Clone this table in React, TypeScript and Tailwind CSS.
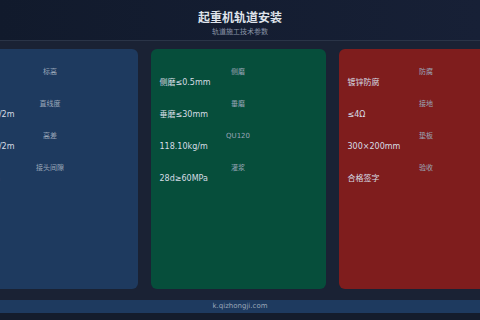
const cards = [
  {
    bg: "bg-[#1e3a5f]",
    rows: [
      { label: "标高", value: "合格证" },
      { label: "直线度", value: "≤1mm/2m" },
      { label: "高差", value: "≤1mm/2m" },
      { label: "接头间隙", value: "2-4mm" },
    ],
  },
  {
    bg: "bg-[#064e3b]",
    rows: [
      { label: "侧磨", value: "侧磨≤0.5mm" },
      { label: "垂磨", value: "垂磨≤30mm" },
      { label: "QU120", value: "118.10kg/m" },
      { label: "灌浆", value: "28d≥60MPa" },
    ],
  },
  {
    bg: "bg-[#7f1d1d]",
    rows: [
      { label: "防腐", value: "镀锌防腐" },
      { label: "接地", value: "≤4Ω" },
      { label: "垫板", value: "300×200mm" },
      { label: "验收", value: "合格签字" },
    ],
  },
];

const App = () => {
  return (
    <div
      className="flex h-[320px] w-[480px] flex-col overflow-hidden bg-[#1a2234]"
      style={{ fontFamily: '"DejaVu Sans", "Noto Sans CJK SC", sans-serif' }}
    >
      <header className="flex h-[41px] shrink-0 flex-col items-center border-b border-[#2a3447] bg-gradient-to-r from-[#111a2c] to-[#172036] pt-[10px]">
        <h1 className="text-[12px] leading-[16px] font-semibold text-[#dfe3ea]">
          起重机轨道安装
        </h1>
        <p className="mt-[1px] text-[7px] leading-[10px] text-[#8a94a6]">
          轨道施工技术参数
        </p>
      </header>

      <section className="flex shrink-0 justify-center gap-[13px] pt-[8px] pr-[4px]">
        {cards.map((card, i) => (
          <article
            key={i}
            className={`h-[240px] w-[175px] shrink-0 rounded-[6px] px-[9px] pt-[18px] ${card.bg}`}
          >
            {card.rows.map((row) => (
              <div key={row.label} className="h-[32px]">
                <p className="text-center text-[7px] leading-[10px] text-[#9aa6b8]">
                  {row.label}
                </p>
                <p className="text-[8px] leading-[11px] text-[#d6dce5]">
                  {row.value}
                </p>
              </div>
            ))}
          </article>
        ))}
      </section>

      <footer className="mt-[11px] flex h-[13px] shrink-0 items-center justify-center bg-[#1e3a5f] text-[7px] text-[#9aa6b8]">
        k.qizhongji.com
      </footer>
      <div className="flex-1 bg-[#141c2c]" />
    </div>
  );
};

export default App;
